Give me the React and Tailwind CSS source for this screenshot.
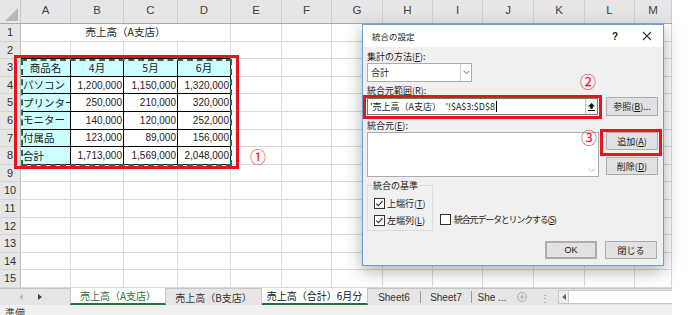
const JP = "font-['Noto_Sans_CJK_JP',sans-serif]";
const NUM = "font-['Liberation_Sans','Noto_Sans_CJK_JP',sans-serif]";
const GRID =
  "grid grid-cols-[21px_50px_53px_54px_53px_51px_50px_51px_50px_50px_51px_51px_50px_37px]";
const COLS = ["A", "B", "C", "D", "E", "F", "G", "H", "I", "J", "K", "L", "M"];

const TABLE = {
  3: ["商品名", "4月", "5月", "6月"],
  4: ["パソコン", "1,200,000", "1,150,000", "1,320,000"],
  5: ["プリンター", "250,000", "210,000", "320,000"],
  6: ["モニター", "140,000", "120,000", "252,000"],
  7: ["付属品", "123,000", "89,000", "156,000"],
  8: ["合計", "1,713,000", "1,569,000", "2,048,000"],
};

const RowNum = ({ n }) => (
  <div
    className={`flex items-center justify-center bg-[#e6e6e6] border-r border-b border-r-[#bcbcbc] border-b-[#d4d4d4] text-[11px] text-[#333] ${NUM}`}
  >
    {n}
  </div>
);

const Plain = ({ dark }) => (
  <div
    className={
      dark
        ? "border-r border-b border-r-[#dadada] border-b-black"
        : "border-r border-b border-[#dadada]"
    }
  />
);

const Row = ({ n }) => {
  const data = TABLE[n];
  if (n === 1) {
    return (
      <div className={`${GRID} h-[17.6px]`}>
        <RowNum n={n} />
        <div
          className={`col-span-4 flex items-center justify-center border-r border-b border-[#dadada] text-[10.5px] text-[#222] ${JP}`}
        >
          売上高（A支店）
        </div>
        {COLS.slice(4).map((c) => (
          <Plain key={c} />
        ))}
      </div>
    );
  }
  return (
    <div className={`${GRID} h-[17.6px]`}>
      <RowNum n={n} />
      {COLS.map((c, i) => {
        if (!data || i > 3) return <Plain key={c} dark={n === 2 && i < 4} />;
        const cyan = n === 3 || i === 0;
        const align =
          n === 3 ? "justify-center" : i === 0 ? "justify-start pl-[2px]" : "justify-end pr-[1px]";
        const font = i === 0 || n === 3 ? `${JP} text-[10.5px]` : `${NUM} text-[10px]`;
        return (
          <div
            key={c}
            className={`flex items-center overflow-hidden whitespace-nowrap border-r border-b border-black text-[#222] ${
              cyan ? "bg-[#ccffff]" : "bg-white"
            } ${align} ${font}`}
          >
            {data[i]}
          </div>
        );
      })}
    </div>
  );
};

const Check = ({ on }) => (
  <svg width="11" height="11" viewBox="0 0 11 11" className="shrink-0">
    <rect x="0.5" y="0.5" width="10" height="10" fill="white" stroke="#333" />
    {on && <path d="M2.3 5.6 L4.4 7.7 L8.6 3.2" fill="none" stroke="#333" strokeWidth="1.2" />}
  </svg>
);

const Btn = ({ children, className = "" }) => (
  <div
    className={`w-[52px] flex items-center justify-center bg-[#e1e1e1] border border-[#adadad] ${className}`}
  >
    {children}
  </div>
);

const Chevron = () => (
  <svg width="7" height="5" viewBox="0 0 7 5">
    <path d="M0.5 0.8 L3.5 3.8 L6.5 0.8" fill="none" stroke="#666" strokeWidth="1" />
  </svg>
);

const Dialog = () => (
  <div
    className={`absolute left-[362px] top-[24px] w-[302px] h-[242px] flex flex-col border border-[#6b9fd6] bg-[#f0f0f0] shadow-[0_5px_16px_rgba(0,0,0,0.32)] text-[9px] leading-[13px] text-[#1a1a1a] ${JP}`}
  >
    <div className="h-[22px] shrink-0 bg-white flex items-center pl-[9px] pr-[11px]">
      <span className="flex-1 text-[8.5px]">統合の設定</span>
      <span className={`w-[8px] text-center text-[10px] font-bold ${NUM}`}>?</span>
      <span className="w-[23px]" />
      <svg width="10" height="10" viewBox="0 0 10 10">
        <path d="M1 1 L9 9 M9 1 L1 9" stroke="#333" strokeWidth="1.1" />
      </svg>
    </div>
    <div className="flex flex-col flex-1 pl-[4px] pr-[5px] pt-[3px] pb-[6px]">
      <div>
        集計の方法(<span className="underline">F</span>):
      </div>
      <div className="w-[105px] h-[19px] flex bg-white border border-[#abadb3]">
        <div className="flex-1 flex items-center pl-[3px]">合計</div>
        <div className="w-[11px] flex items-center justify-center border-l border-[#d0d0d0]">
          <Chevron />
        </div>
      </div>
      <div className="mt-[2px]">
        統合元範囲(<span className="underline">R</span>):
      </div>
      <div className="h-[19px] flex items-center">
        <div className="w-[231px] h-[17px] flex bg-white border border-[#7a7a7a]">
          <div className="flex-1 flex items-center pl-[2px] whitespace-nowrap">
            <span>'売上高（A支店）　'!$A$3:$D$8</span>
            <span className="w-px h-[11px] bg-black ml-px" />
          </div>
          <div className="w-[12px] flex items-center justify-center border-l border-[#c8c8c8] bg-[#f4f4f4]">
            <svg width="7" height="8" viewBox="0 0 7 8">
              <path d="M3.5 0 L7 3.6 H4.8 V5.8 H2.2 V3.6 H0 Z" fill="#111" />
              <path d="M0 7.5 H7" stroke="#111" strokeWidth="1" />
            </svg>
          </div>
        </div>
        <Btn className="ml-[8px] h-[19px]">
          参照(<span className="underline">B</span>)...
        </Btn>
      </div>
      <div className="mt-[3px]">
        統合元(<span className="underline">E</span>):
      </div>
      <div className="flex">
        <div className="w-[232px] h-[45px] flex items-end justify-end bg-white border border-[#abadb3] pr-[3px] pb-[3px]">
          <svg width="7" height="5" viewBox="0 0 7 5">
            <path d="M0.5 0.8 L3.5 3.8 L6.5 0.8" fill="none" stroke="#bbb" strokeWidth="1" />
          </svg>
        </div>
        <div className="ml-[7px] flex flex-col gap-[7px]">
          <Btn className="h-[18px]">
            追加(<span className="underline">A</span>)
          </Btn>
          <Btn className="h-[18px]">
            削除(<span className="underline">D</span>)
          </Btn>
        </div>
      </div>
      <div className="mt-[2px] flex items-end">
        <fieldset className="w-[66px] h-[52px] border border-[#dcdcdc] pl-[6px] pt-[5px] flex flex-col gap-[4px]">
          <legend className="px-[1px] -ml-[2px]">統合の基準</legend>
          <div className="flex items-center gap-[2px]">
            <Check on />
            <span>
              上端行(<span className="underline">T</span>)
            </span>
          </div>
          <div className="flex items-center gap-[2px]">
            <Check on />
            <span>
              左端列(<span className="underline">L</span>)
            </span>
          </div>
        </fieldset>
        <div className="ml-[7px] mb-[5px] flex items-center gap-[3px]">
          <Check />
          <span className="tracking-[-1.2px]">
            統合元データとリンクする(<span className="underline">S</span>)
          </span>
        </div>
      </div>
      <div className="mt-auto flex justify-end pr-[1px] gap-[8px]">
        <Btn className={`h-[18px] border-2 border-[#0078d7] ${NUM}`}>OK</Btn>
        <Btn className="h-[18px]">閉じる</Btn>
      </div>
    </div>
  </div>
);

const Tri = ({ dir, color }) => (
  <svg width="4" height="6" viewBox="0 0 4 6">
    <path d={dir === "l" ? "M4 0 L0 3 L4 6 Z" : "M0 0 L4 3 L0 6 Z"} fill={color} />
  </svg>
);

const Sep = () => <div className="w-px h-[12px] bg-[#9a9a9a] self-center" />;

const TabBar = () => (
  <div className={`h-[19px] flex bg-[#e6e6e6] border-t border-[#c6c6c6] text-[10px] text-[#333] ${JP}`}>
    <div className="w-[70px] flex items-center pl-[19px] gap-[15px]">
      <Tri dir="l" color="#c0c0c0" />
      <Tri dir="r" color="#444" />
    </div>
    <div className="w-[96px] -mt-px flex items-center justify-center bg-white border-x border-[#c6c6c6] border-b-2 border-b-[#217346] text-[#217346]">
      売上高（A支店）
    </div>
    <div className="w-[96px] flex items-center justify-center border-r border-[#c6c6c6]">
      売上高（B支店）
    </div>
    <div className="w-[106px] -mt-px flex items-center justify-center bg-white border-r border-[#c6c6c6] border-b-2 border-b-[#217346] text-[#111]">
      売上高（合計）6月分
    </div>
    <div className={`w-[52px] flex items-center justify-center ${NUM}`}>Sheet6</div>
    <Sep />
    <div className={`w-[50px] flex items-center justify-center ${NUM}`}>Sheet7</div>
    <Sep />
    <div className={`w-[40px] flex items-center justify-center ${NUM}`}>She ...</div>
    <div className="w-[20px] flex items-center justify-center">
      <svg width="10" height="10" viewBox="0 0 10 10">
        <circle cx="5" cy="5" r="4.5" fill="none" stroke="#aaa" />
        <path d="M5 2.5 V7.5 M2.5 5 H7.5" stroke="#aaa" />
      </svg>
    </div>
    <div className="w-[26px] flex items-center justify-center text-[#888]">⋮</div>
    <div className="flex-1 my-[1px] flex bg-white border-y border-[#c8c8c8]">
      <div className="w-[11px] flex items-center justify-center border-x border-[#c8c8c8] bg-[#f0f0f0]">
        <Tri dir="l" color="#666" />
      </div>
    </div>
  </div>
);

export default function App() {
  return (
    <div className="w-[699px] h-[315px] bg-white overflow-hidden">
      <div className="w-[672px] h-[315px] flex flex-col">
        <div className="relative h-[288px] shrink-0">
          <div className={`${GRID} h-[24px] bg-[#e6e6e6] border-b border-[#ababab]`}>
            <div className="relative border-r border-[#c6c6c6]">
              <svg className="absolute right-[2px] bottom-[2px]" width="13" height="13" viewBox="0 0 13 13">
                <path d="M13 0 L13 13 L0 13 Z" fill="#b8b8b8" />
              </svg>
            </div>
            {COLS.map((c) => (
              <div
                key={c}
                className={`flex items-end justify-center pb-[4px] border-r border-[#d0d0d0] text-[11.5px] text-[#444] ${NUM}`}
              >
                {c}
              </div>
            ))}
          </div>
          {Array.from({ length: 15 }, (_, i) => (
            <Row key={i} n={i + 1} />
          ))}

          {/* copy marquee */}
          <div className="absolute left-[21px] top-[59px] w-[211px] h-[107px] border-2 border-dashed border-[#1e7145]" />
          {/* annotations */}
          <div className="absolute left-[14px] top-[55px] w-[225px] h-[114px] border-[3px] border-[#e8141c]" />
          <span className={`absolute left-[250px] top-[148px] text-[16px] leading-none text-[#e8141c] ${JP}`}>①</span>

          <Dialog />

          <div className="absolute left-[363px] top-[95px] w-[239px] h-[24px] border-[3px] border-[#e8141c]" />
          <div className="absolute left-[600px] top-[129px] w-[62px] h-[27px] border-[3px] border-[#e8141c]" />
          <span className={`absolute left-[580px] top-[73px] text-[16px] leading-none text-[#e8141c] ${JP}`}>②</span>
          <span className={`absolute left-[581px] top-[129px] text-[16px] leading-none text-[#e8141c] ${JP}`}>③</span>
        </div>
        <TabBar />
        <div className={`flex-1 bg-[#f0f0f0] pl-[5px] pt-[3px] text-[10px] leading-none text-[#444] ${JP}`}>準備</div>
      </div>
    </div>
  );
}
